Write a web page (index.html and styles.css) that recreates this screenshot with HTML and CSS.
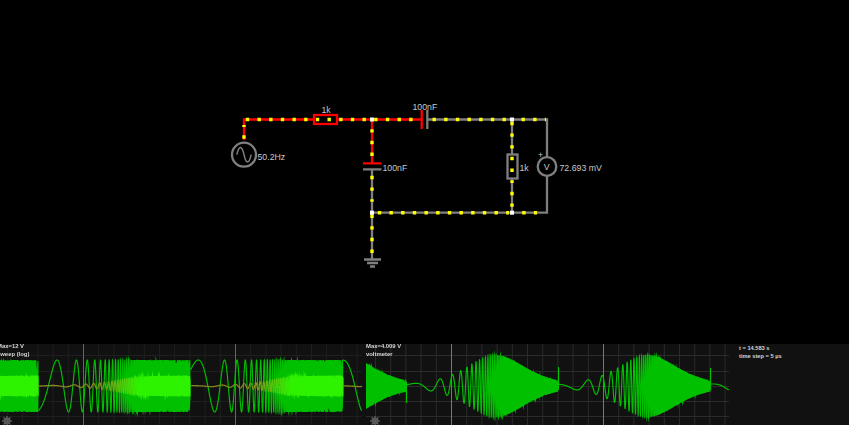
FILE: index.html
```html
<!DOCTYPE html>
<html lang="en">
<head>
    <meta charset="UTF-8">
    <meta name="viewport" content="width=device-width, initial-scale=1.0">
    <title>Circuit Simulator</title>
    <link rel="stylesheet" href="styles.css">
</head>
<body>
    <svg class="circuit" viewBox="0 0 849 344" xmlns="http://www.w3.org/2000/svg">
        <!-- live (red) side -->
        <g class="wire hot">
            <path d="M244 140V119.5H313.5M337.5 119.5H421.5M372 119.5V163"/>
            <rect x="314" y="115" width="23" height="9"/>
            <path d="M421.7 110V129M363 163.3H381.5"/>
        </g>
        <!-- neutral (grey) side -->
        <g class="wire">
            <path d="M427.3 110V129M363 169.3H381.5"/>
            <path d="M427.3 119.5H547V212.7H372M372 169.3V259M512 119.5V154M512 178.5V212.7"/>
            <rect x="507.5" y="154.5" width="10" height="24"/>
            <path d="M364 259.5H381M367 263H378M370 266.5H375"/>
            <circle class="part" cx="244" cy="154.7" r="12"/>
            <path class="thin" d="M236.8 154.7C239 145 242 145 244 154.7S249 164.5 251.2 154.7"/>
            <circle class="part" cx="547" cy="166.5" r="9.3"/>
        </g>
        <!-- current dots -->
        <g class="dots">
            <path d="M244 138.7V125"/>
            <path d="M245.8 119.5H420"/>
            <path d="M432.5 119.5H506"/>
            <path d="M521.5 119.5H546"/>
            <path d="M372 129.2V156"/>
            <path d="M372 175.8V201.8"/>
            <path d="M372 214.5V253"/>
            <path d="M377.8 212.7H509"/>
            <path d="M522.2 212.7H537"/>
            <path d="M512 121.8V183"/>
            <path d="M512 191.8V207"/>
        </g>
        <g class="nodes">
            <rect x="370" y="117.5" width="4" height="4"/>
            <rect x="510" y="117.5" width="4" height="4"/>
            <rect x="370" y="210.7" width="4" height="4"/>
            <rect x="510" y="210.7" width="4" height="4"/>
        </g>
        <g class="labels">
            <text x="321.5" y="113">1k</text>
            <text x="257.5" y="159.5">50.2Hz</text>
            <text x="412.5" y="109.5">100nF</text>
            <text x="382.5" y="171">100nF</text>
            <text x="519.5" y="171">1k</text>
            <text x="559.5" y="171">72.693 mV</text>
            <text x="543.7" y="169.5">V</text>
            <text x="538" y="158">+</text>
        </g>
    </svg>

    <div class="scopes">
        <div class="scope scope-sweep">
            <canvas id="sweepPlot" width="362" height="81"></canvas>
            <div class="scope-label label-clipped">Max=12 V<br>sweep (log)</div>
            <svg class="gear" viewBox="0 0 10 10"><circle cx="5" cy="5" r="2.7"/><path d="M5 0V10M0 5H10M1.5 1.5L8.5 8.5M8.5 1.5L1.5 8.5"/></svg>
        </div>
        <div class="scope scope-meter">
            <canvas id="meterPlot" width="363" height="81"></canvas>
            <div class="scope-label">Max=4.009 V<br>voltmeter</div>
            <svg class="gear gear-meter" viewBox="0 0 10 10"><circle cx="5" cy="5" r="2.7"/><path d="M5 0V10M0 5H10M1.5 1.5L8.5 8.5M8.5 1.5L1.5 8.5"/></svg>
        </div>
        <div class="info">t = 14.583 s<br>time step = 5 µs</div>
    </div>

    <script src="script.js"></script>
</body>
</html>
```

FILE: styles.css
```css
body {
    margin: 0;
    height: 100vh;
    overflow: hidden;
    background-color: #000;
    display: flex;
    flex-direction: column;
    font-family: "Liberation Sans", Arial, sans-serif;
}
.circuit {
    display: block;
    width: 849px;
    height: 344px;
    flex: none;
}
.wire {
    fill: none;
    stroke: #7f7f7f;
    stroke-width: 2.3;
}
.wire.hot {
    stroke: #f00;
}
.wire .part {
    fill: #000;
}
.wire .thin {
    stroke-width: 1.5;
}
.dots {
    fill: none;
    stroke: #ff0;
    stroke-width: 3.4;
    stroke-dasharray: 3.4 8.27;
}
.nodes {
    fill: #fff;
}
.labels {
    fill: #c8c8c8;
    font-size: 8.75px;
}
.scopes {
    display: flex;
    height: 81px;
    background-color: #111;
}
.scope {
    position: relative;
    overflow: hidden;
    height: 81px;
}
.scope canvas {
    display: block;
}
.scope-sweep {
    width: 362px;
    margin-right: 4px;
}
.scope-meter {
    width: 363px;
}
.scope-label {
    position: absolute;
    top: -1px;
    left: 0;
    font-size: 5.9px;
    line-height: 7.6px;
    font-weight: bold;
    color: #d4d4d4;
}
.label-clipped {
    left: -3px;
}
.gear {
    position: absolute;
    left: 2px;
    bottom: -1px;
    width: 10px;
    height: 10px;
    fill: #111;
    stroke: #5a5a5a;
    stroke-width: 1.4;
}
.gear-meter {
    left: 4px;
}
.info {
    padding: 1px 0 0 10px;
    font-size: 5.7px;
    line-height: 7.6px;
    font-weight: bold;
    color: #d4d4d4;
}
```

FILE: script.js
```js
const PERIOD = 152;
const K = 0.04;      // log sweep rate
const W0 = 0.1;      // start freq in rad/px
const T_PEAK = 90;   // where the band pass peaks
const MID = 42;

function sweepPhase(t, start) {
    return start + (W0 / K) * (Math.exp(K * t) - 1);
}

// Grid shared by both scopes
function drawGrid(ctx, width, bright, color, brightColor) {
    ctx.lineWidth = 1;
    ctx.strokeStyle = color;
    for (let x = bright % 15.2; x < width; x += 15.2) {
        ctx.beginPath();
        ctx.moveTo(x, 0);
        ctx.lineTo(x, 81);
        ctx.stroke();
    }
    [11, 27, 42, 57, 72].forEach((y) => {
        ctx.beginPath();
        ctx.moveTo(0, y + 0.5);
        ctx.lineTo(width, y + 0.5);
        ctx.stroke();
    });
    ctx.strokeStyle = brightColor;
    for (let x = bright % PERIOD; x < width; x += PERIOD) {
        ctx.beginPath();
        ctx.moveTo(x, 0);
        ctx.lineTo(x, 81);
        ctx.stroke();
    }
}

function mix(t) {
    // olive on black, bright green on the solid band
    const f = Math.min(1, Math.max(0, (t - 60) / 40));
    const r = Math.round(138 + (46 - 138) * f);
    const g = Math.round(138 + (242 - 138) * f);
    const b = Math.round(32 * (1 - f));
    return `rgb(${r},${g},${b})`;
}

function drawSweep() {
    const ctx = document.getElementById("sweepPlot").getContext("2d");
    drawGrid(ctx, 362, 83.5, "#1f1f1f", "#666");

    // each sweep restarts at another phase
    const sweeps = [
        { from: -114, start: 0.4 },
        { from: 38, start: -1.28 },
        { from: 190.7, start: 0.68 },
        { from: 342.7, start: Math.PI / 2 },
    ];
    const step = 0.05;

    ctx.lineWidth = 1.15;
    ctx.strokeStyle = "#00c000";
    ctx.beginPath();
    sweeps.forEach((s) => {
        const end = Math.min(s.from + PERIOD, 361.7);
        let first = true;
        for (let x = Math.max(s.from, 0); x < end; x += step) {
            const y = MID - 26 * Math.sin(sweepPhase(x - s.from, s.start));
            if (first) ctx.moveTo(x, y);
            else ctx.lineTo(x, y);
            first = false;
        }
    });
    ctx.stroke();

    // current trace, drawn column by column so its colour can change
    ctx.lineWidth = 1.3;
    sweeps.forEach((s) => {
        const end = Math.min(s.from + PERIOD, 361.7);
        for (let col = Math.max(Math.floor(s.from), 0); col < end; col++) {
            const t0 = col - s.from;
            ctx.strokeStyle = mix(t0);
            ctx.beginPath();
            for (let x = col; x <= col + 1; x += step) {
                const t = x - s.from;
                if (t < 0) continue;
                const r = Math.exp(K * (t - T_PEAK));
                const amp = 10.5 * r / Math.sqrt(1 + r * r);
                ctx.lineTo(x, MID - amp * Math.sin(sweepPhase(t, s.start) + 1));
            }
            ctx.stroke();
        }
    });
}

function drawMeter() {
    const ctx = document.getElementById("meterPlot").getContext("2d");
    drawGrid(ctx, 363, 85.5, "#2b2b2b", "#777");

    // x here is relative to the scope, which starts at 366 on the page
    const sweeps = [
        { from: -112, start: 0.4 },
        { from: 40, start: 0.61 },
        { from: 192, start: 2.05 },
        { from: 344, start: Math.PI / 2 },
    ];
    const step = 0.05;

    ctx.lineWidth = 1.15;
    ctx.strokeStyle = "#00c000";
    ctx.beginPath();
    sweeps.forEach((s) => {
        const end = Math.min(s.from + PERIOD, 363);
        let first = true;
        for (let x = Math.max(s.from, 0); x < end; x += step) {
            const t = x - s.from;
            const r = Math.exp(K * (t - T_PEAK));
            const q = 0.45 * (r - 1 / r);
            const amp = 31 / Math.sqrt(1 + q * q);
            const y = MID - amp * Math.sin(sweepPhase(t, s.start));
            if (first) ctx.moveTo(x, y);
            else ctx.lineTo(x, y);
            first = false;
        }
    });
    ctx.stroke();

    // spikes where the sweep jumps back
    ctx.beginPath();
    ctx.moveTo(40.5, 38);
    ctx.lineTo(40.5, 59);
    ctx.moveTo(192.5, 23);
    ctx.lineTo(192.5, 46);
    ctx.moveTo(344.5, 24);
    ctx.lineTo(344.5, 46);
    ctx.stroke();
}

drawSweep();
drawMeter();
```
